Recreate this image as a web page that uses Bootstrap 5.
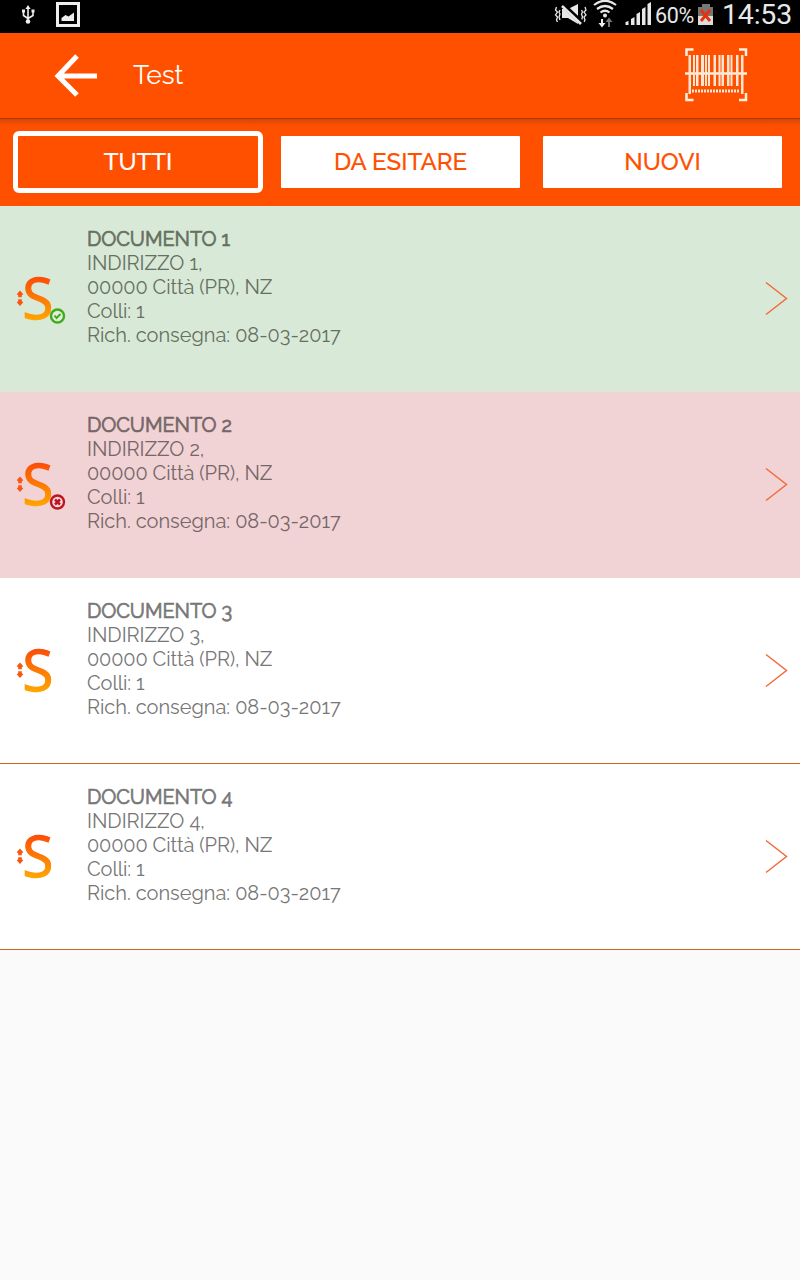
<!DOCTYPE html>
<html lang="it">
<head>
<meta charset="utf-8">
<meta name="viewport" content="width=device-width, initial-scale=1">
<title>Test</title>
<link rel="stylesheet" href="https://cdn.jsdelivr.net/npm/bootstrap@5.3.0/dist/css/bootstrap.min.css">
<style>
  :root { --brand: #ff5000; }
  body { background: #fafafa; font-family: Raleway, Lato, sans-serif; color: #777; }
  svg { display: block; flex: none; }
  .status-bar { height: 33px; background: #000; color: #e8e8e8; font-family: Roboto, sans-serif; padding-right: 8px; }
  .battery-text { font-size: 21.5px; line-height: 32px; width: 39px; letter-spacing: -.3px; }
  .clock { font-size: 28.5px; line-height: 30px; width: 70px; letter-spacing: -.2px; }
  .app-bar { height: 86px; background: var(--brand); border-bottom: 1px solid #a83a08; color: #fff; }
  .app-title { font-size: 26.5px; line-height: 40px; font-weight: 400; margin-top: 22px; }
  .tabs { height: 87px; background: linear-gradient(#d94607, var(--brand) 7px); padding: 12px 18px 0 13px; }
  .tab { height: 52px; width: 239px; margin-top: 5px; border: 0; border-radius: 1px; background: #fff; color: var(--brand); font-size: 24px; font-weight: 500; line-height: 52px; padding: 0; -webkit-text-stroke: .2px currentColor; }
  .tab.active { height: 62px; width: 250px; margin: 0 -5px 0 0; border: 5px solid #fff; border-radius: 6px; background: var(--brand); color: #fff; padding-bottom: 1px; }
  .doc { height: 186px; background: #fff; border-bottom: 1px solid #cf6420; padding: 21px 12px 0 15px; }
  .doc.done { background: #d8e9d8; border-color: #d8e9d8; }
  .doc.failed { background: #f1d3d5; border-color: #f1d3d5; }
  .doc-text { font-size: 20px; line-height: 24px; margin-left: 20px; white-space: nowrap; letter-spacing: -.02px; }
  .doc-name { -webkit-text-stroke: .7px currentColor; letter-spacing: -.06px; }
  .doc-city { letter-spacing: -.12px; }
  .done .doc-text { color: #66705f; }
  .failed .doc-text { color: #756668; }
  .doc-icon { margin-top: 47px; }
  .doc-arrow { margin-top: 53px; }
  .logo-letter { font-family: "Open Sans", sans-serif; font-size: 56px; }
</style>
</head>
<body>
<svg width="0" height="0" class="position-absolute">
  <defs>
    <linearGradient id="flame" gradientUnits="userSpaceOnUse" x1="0" y1="3" x2="0" y2="47">
      <stop offset="0" stop-color="#fb4d08"/><stop offset="1" stop-color="#ffa800"/>
    </linearGradient>
    <symbol id="logo" viewBox="0 0 52 60">
      <text class="logo-letter" x="7.500" y="45" fill="url(#flame)" stroke="url(#flame)" stroke-width="1.300">S</text>
      <path d="M5 16.500l3.300 3.700-1.500 1v2H3.200v-2l-1.500-1zM5 32l-3.300-3.700 1.500-1v-2h3.600v2l1.500 1z" fill="#fa5511"/>
    </symbol>
    <symbol id="chevron" viewBox="0 0 24 36"><path d="M2 2.500l20.500 16L2 34.500" fill="none" stroke="#f26a3d" stroke-width="1.500"/></symbol>
  </defs>
</svg>

<header class="status-bar d-flex">
  <svg width="90" height="33" viewBox="0 0 90 33">
    <g fill="none" stroke="#eee" stroke-width="1.600"><path d="M28 8v14M23.500 11v4.500l4.500 3 5-3V11"/></g>
    <path d="M28 5l2.600 4h-5.200zM22 9.500h3v3h-3zM31.500 9.500h3v3h-3z" fill="#eee"/><circle cx="28" cy="21.500" r="2.300" fill="#eee"/>
    <rect x="57.500" y="3.500" width="21" height="22" fill="none" stroke="#eee" stroke-width="3"/>
    <path d="M61.500 21v-3l4-3 3 1.500 5.500-4V21z" fill="#eee"/>
  </svg>
  <svg class="ms-auto" width="105" height="33" viewBox="550 0 105 33">
    <g fill="none" stroke="#e8e8e8">
      <path d="M556.500 7l-1 3 2 2-2 3 2 2-1 3 1 2M560 10l-1 2 1 2-1 3 1 3M581.500 10l1 2-1 2 1 3-1 3M585 7l1 3-2 2 2 3-2 2 1 3-1 2" stroke-width="1.300"/>
    </g>
    <path d="M562 9h6l10-5v20l-10-6h-6z" fill="#e8e8e8"/>
    <path d="M563 5l19 18" stroke="#000" stroke-width="5"/><path d="M562 6l19 18" stroke="#e8e8e8" stroke-width="2.500"/>
    <g fill="none" stroke="#e8e8e8" stroke-width="2.200"><path d="M594 5q11-8.500 22 0M597 9q8-6 16 0M600.500 12.500q4.500-3.500 9 0"/></g>
    <circle cx="605" cy="15.500" r="2" fill="#e8e8e8"/>
    <path d="M601 19h2v4h2.500l-3.500 4.500-3.500-4.500h2.500z" fill="#eee"/><path d="M608 27h2v-5h2.500l-3.500-4.500-3.500 4.500h2.500z" fill="#777"/>
    <path d="M625.500 25v-3l3-1v4zM631 25v-6l3.500-2v8zM636.500 25V14l3.500-2v13zM642 25V9l3.500-2v18zM647.500 25V4l3.500-2v23z" fill="#e8e8e8"/>
  </svg>
  <span class="battery-text">60%</span>
  <svg class="ms-1" width="16" height="33" viewBox="0 0 16 33"><path d="M4 4h8v3h3v9H0V7h4z" fill="#777"/><path d="M0 16h15v9H0z" fill="#ddd"/><path d="M3 10l9 11M12 10L3 21" stroke="#e8300b" stroke-width="2.800"/></svg>
  <span class="clock ms-2">14:53</span>
</header>

<nav class="app-bar d-flex align-items-start">
  <svg width="133" height="85" viewBox="0 33 133 85"><path d="M57 76h40M77 56L58 76l19 19" fill="none" stroke="#fff" stroke-width="5"/></svg>
  <h1 class="app-title mb-0">Test</h1>
  <svg class="ms-auto" width="116" height="85" viewBox="684 33 116 85">
    <g fill="none" stroke="#fff0df" stroke-width="2.500"><path d="M686.500 56v-6.500h7M739 49.500h7V56M686.500 93v7h7M739 100h7v-7"/></g>
    <path d="M685 73.500h62" stroke="#fff0df" stroke-width="2.500"/>
    <g fill="#ffe6d2">
      <path d="M688.500 55h2.500v39h-2.500zM693 55h2v31h-2zM696 55h2.500v31H696zM701 55h3v31h-3zM705 55h2v31h-2zM708 55h2v31h-2zM713.500 55h2.500v31h-2.500zM718.500 55h2v31h-2zM721.500 55h2.500v31h-2.500zM727 55h2.500v31H727zM730.500 55h2v31h-2zM736 55h2.500v31H736zM741 55h2.500v39H741z"/>
    </g>
    <path d="M692 91h48" stroke="#ffe6d2" stroke-width="3" stroke-dasharray="2 1"/>
  </svg>
</nav>

<div class="tabs d-flex justify-content-between align-items-start">
  <button class="tab active lh-1">TUTTI</button>
  <button class="tab">DA ESITARE</button>
  <button class="tab">NUOVI</button>
</div>

<main>
  <section class="doc done d-flex align-items-start">
    <svg class="doc-icon" width="52" height="60"><use href="#logo"/><circle cx="42.500" cy="42" r="6.500" fill="#e1ede0" stroke="#42ac18" stroke-width="2.400"/><path d="M39.500 41.500l2 2.500 4-4" fill="none" stroke="#42ac18" stroke-width="2"/></svg>
    <div class="doc-text"><div class="doc-name">DOCUMENTO 1</div><div>INDIRIZZO 1,</div><div class="doc-city">00000 Città (PR), NZ</div><div class="doc-city">Colli: 1</div><div>Rich. consegna: 08-03-2017</div></div>
    <svg class="doc-arrow ms-auto" width="24" height="36"><use href="#chevron"/></svg>
  </section>
  <section class="doc failed d-flex align-items-start">
    <svg class="doc-icon" width="52" height="60"><use href="#logo"/><circle cx="42.500" cy="42" r="6.500" fill="#f3dadb" stroke="#bf1420" stroke-width="2.400"/><path d="M40 39.500l5 5M45 39.500l-5 5" fill="none" stroke="#bf1420" stroke-width="2.500"/></svg>
    <div class="doc-text"><div class="doc-name">DOCUMENTO 2</div><div>INDIRIZZO 2,</div><div class="doc-city">00000 Città (PR), NZ</div><div class="doc-city">Colli: 1</div><div>Rich. consegna: 08-03-2017</div></div>
    <svg class="doc-arrow ms-auto" width="24" height="36"><use href="#chevron"/></svg>
  </section>
  <section class="doc d-flex align-items-start">
    <svg class="doc-icon" width="52" height="60"><use href="#logo"/></svg>
    <div class="doc-text"><div class="doc-name">DOCUMENTO 3</div><div>INDIRIZZO 3,</div><div class="doc-city">00000 Città (PR), NZ</div><div class="doc-city">Colli: 1</div><div>Rich. consegna: 08-03-2017</div></div>
    <svg class="doc-arrow ms-auto" width="24" height="36"><use href="#chevron"/></svg>
  </section>
  <section class="doc d-flex align-items-start">
    <svg class="doc-icon" width="52" height="60"><use href="#logo"/></svg>
    <div class="doc-text"><div class="doc-name">DOCUMENTO 4</div><div>INDIRIZZO 4,</div><div class="doc-city">00000 Città (PR), NZ</div><div class="doc-city">Colli: 1</div><div>Rich. consegna: 08-03-2017</div></div>
    <svg class="doc-arrow ms-auto" width="24" height="36"><use href="#chevron"/></svg>
  </section>
</main>
<script src="https://cdn.jsdelivr.net/npm/bootstrap@5.3.0/dist/js/bootstrap.bundle.min.js"></script>
</body>
</html>
